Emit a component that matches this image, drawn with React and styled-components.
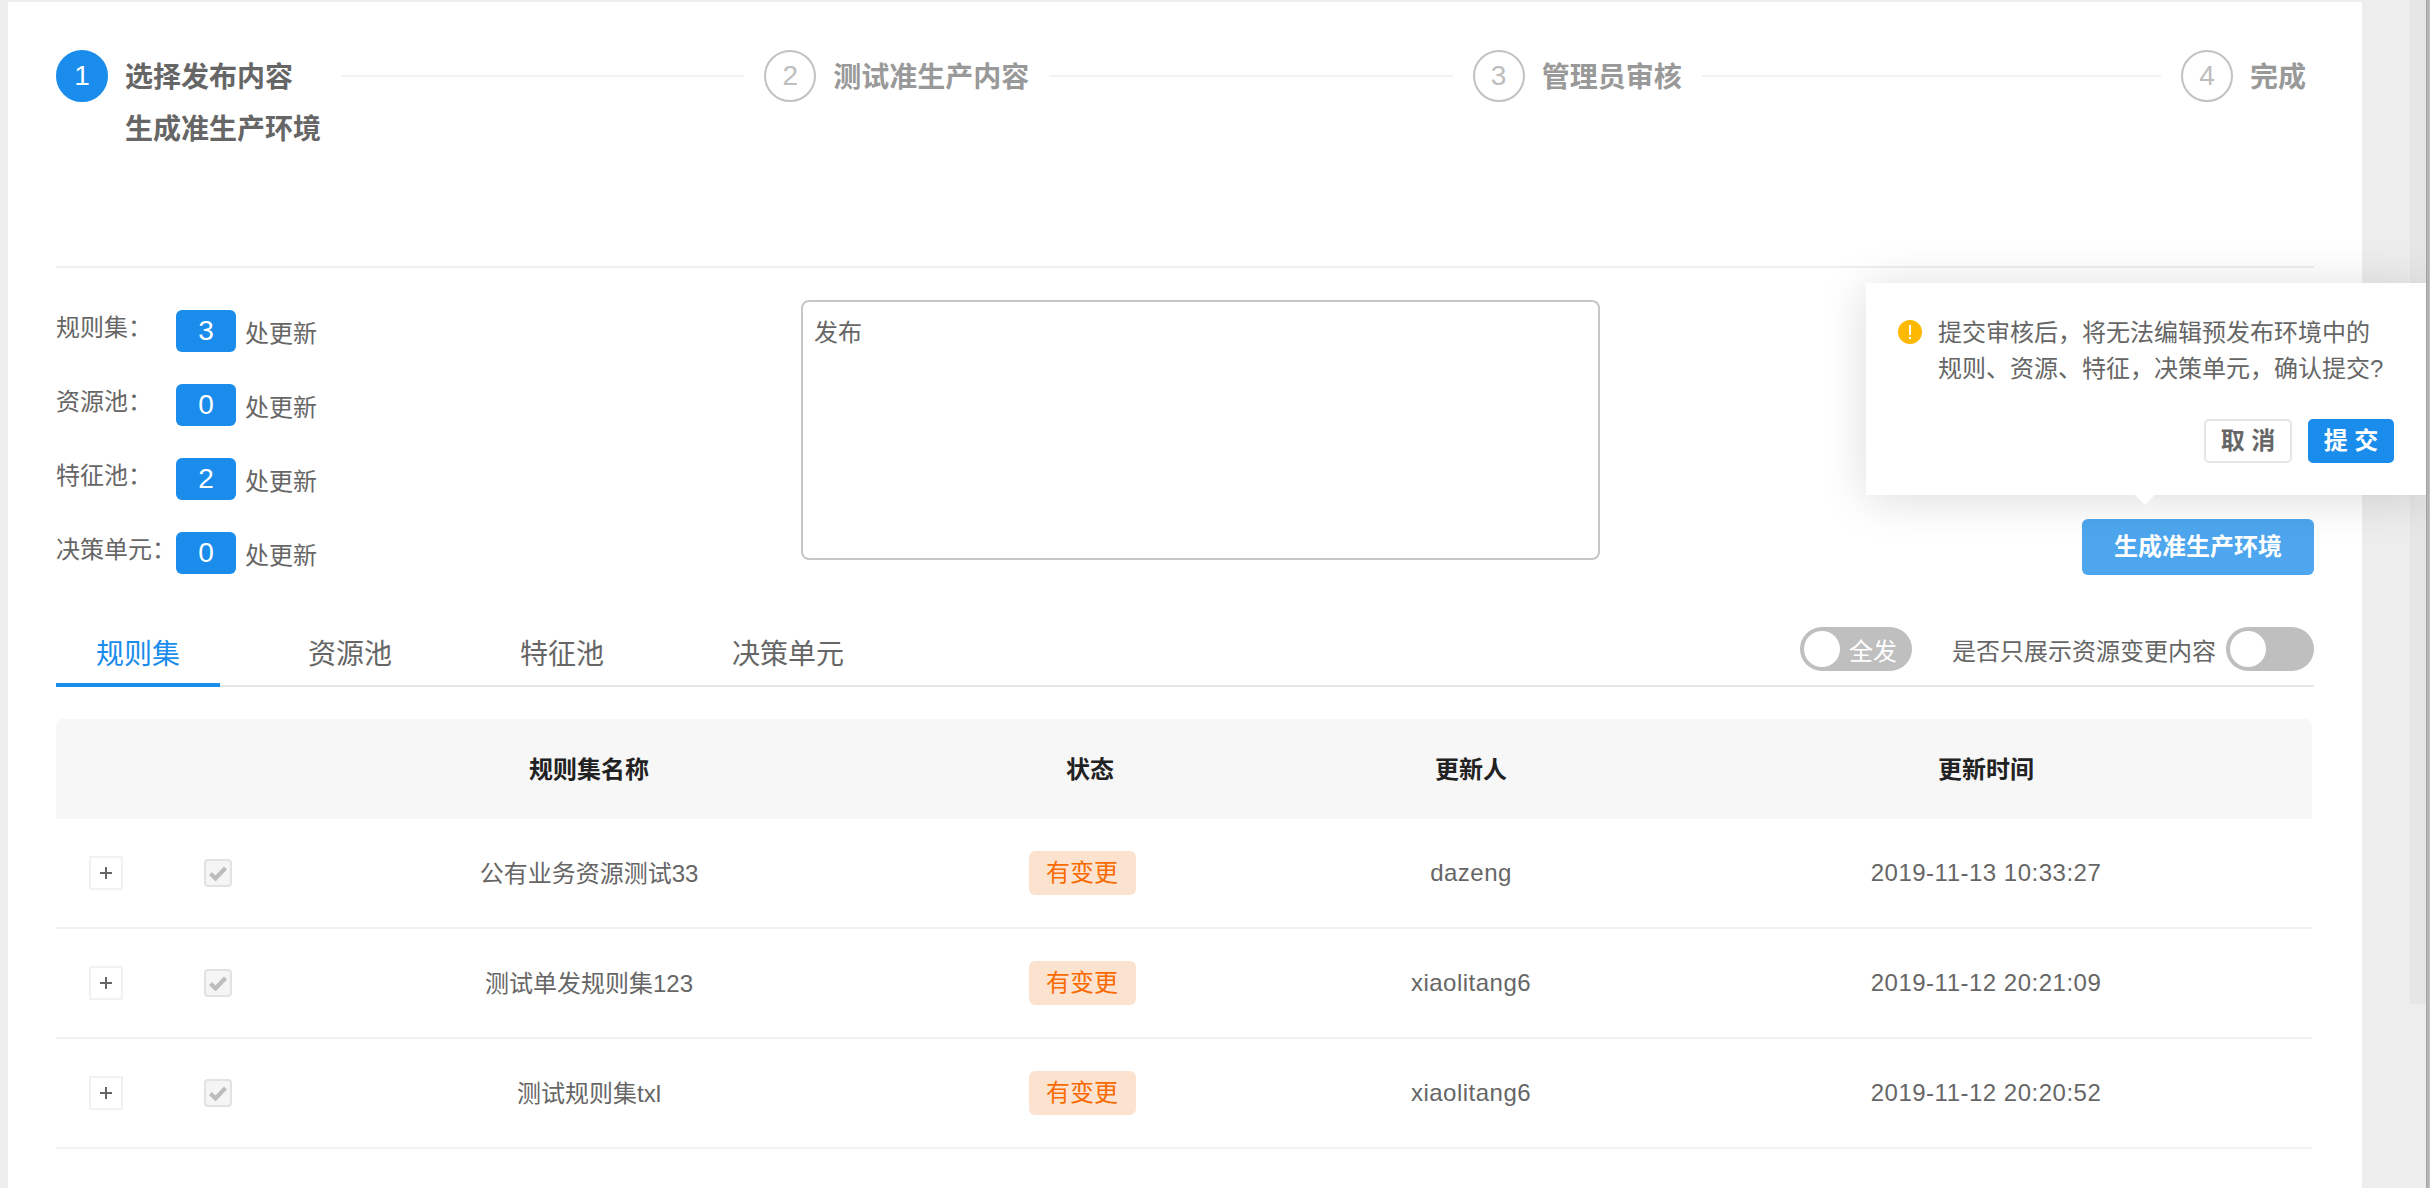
import React from "react";
import styled, { createGlobalStyle } from "styled-components";

const GlobalStyle = createGlobalStyle`
  html, body {
    margin: 0;
    padding: 0;
    background: #ededed;
  }
  body {
    font-family: "Liberation Sans", "Noto Sans CJK SC", sans-serif;
    color: #666;
  }
  * {
    box-sizing: border-box;
  }
`;

const Page = styled.div`
  display: flex;
  height: 1188px;
  overflow: hidden;
  padding-top: 2px;
  padding-left: 8px;
`;

const Panel = styled.main`
  width: 2354px;
  flex: none;
  background: #fff;
  padding: 48px 48px 0;
`;

const Gutter = styled.div`
  flex: 1;
  display: flex;
  justify-content: flex-end;
  margin-top: -2px;
`;

const ScrollThumb = styled.div`
  width: 16px;
  height: 1004px;
  background: #e6e6e6;
`;

const WindowEdge = styled.div`
  width: 4px;
  flex: none;
  margin-top: -2px;
  position: relative;
  z-index: 1;
  background: linear-gradient(90deg, #8e8e8e 0, #b8b8b8 25%, #b0b0b0 75%, #d0d0d0 100%);
`;

// steps
const Steps = styled.div`
  display: flex;
  height: 216px;
`;

const Step = styled.div`
  display: flex;
  flex: ${(p) => (p.$last ? "none" : "1")};
  padding-right: ${(p) => (p.$last ? "8px" : "20px")};
`;

const StepCircle = styled.div`
  width: 52px;
  height: 52px;
  flex: none;
  display: flex;
  align-items: center;
  justify-content: center;
  border-radius: 50%;
  font-size: 28px;
  border: 2px solid ${(p) => (p.$active ? "#1a8cec" : "#c2c2c2")};
  background: ${(p) => (p.$active ? "#1a8cec" : "#fff")};
  color: ${(p) => (p.$active ? "#fff" : "#bdbdbd")};
`;

const StepBody = styled.div`
  margin-left: 17px;
  margin-top: 2px;
  flex: none;
`;

const StepTitle = styled.div`
  font-size: 28px;
  line-height: 52px;
  font-weight: 700;
  color: ${(p) => (p.$active ? "#666" : "#999")};
`;

const StepLine = styled.div`
  flex: 1;
  height: 2px;
  margin: 25px 0 0 20px;
  background: #f2f2f2;
`;

const Divider = styled.div`
  height: 2px;
  background: #efefef;
`;

// summary block
const Summary = styled.section`
  display: flex;
  height: 307px;
  padding-top: 32px;
`;

const Stats = styled.div`
  width: 745px;
  flex: none;
  padding-top: 10px;
  display: flex;
  flex-direction: column;
  gap: 32px;
`;

const StatRow = styled.div`
  display: flex;
  height: 42px;
`;

const StatLabel = styled.div`
  width: 120px;
  font-size: 24px;
  line-height: 36px;
`;

const StatBadge = styled.div`
  width: 60px;
  height: 42px;
  border-radius: 6px;
  background: #1a8cec;
  color: #fff;
  font-size: 28px;
  line-height: 42px;
  text-align: center;
`;

const StatTail = styled.div`
  margin-left: 9px;
  font-size: 24px;
  line-height: 48px;
`;

const Remark = styled.div`
  width: 799px;
  height: 260px;
  flex: none;
  border: 2px solid #c6c6c6;
  border-radius: 8px;
  padding: 13px 11px;
  font-size: 24px;
  line-height: 36px;
`;

const Actions = styled.div`
  flex: 1;
  display: flex;
  justify-content: flex-end;
  align-items: flex-end;
`;

const GenerateWrap = styled.div`
  position: relative;
`;

const GenerateButton = styled.div`
  width: 232px;
  height: 56px;
  border-radius: 6px;
  background: #4da6ee;
  color: #fff;
  font-size: 24px;
  font-weight: 700;
  line-height: 56px;
  text-align: center;
`;

const Popover = styled.div`
  position: absolute;
  right: -112px;
  bottom: calc(100% + 24px);
  width: 560px;
  height: 212px;
  padding: 32px 20px 0 32px;
  background: #fff;
  box-shadow: 0 4px 44px rgba(0, 0, 0, 0.14);

  &::after {
    content: "";
    position: absolute;
    left: 50%;
    bottom: -7px;
    width: 14px;
    height: 14px;
    margin-left: -8px;
    background: #fff;
    transform: rotate(45deg);
  }
`;

const PopMessage = styled.div`
  display: flex;
  gap: 16px;
  font-size: 24px;
  line-height: 36px;
  white-space: nowrap;
`;

const WarnIcon = styled.svg`
  width: 24px;
  height: 24px;
  flex: none;
  margin-top: 5px;
`;

const PopButtons = styled.div`
  display: flex;
  justify-content: flex-end;
  gap: 16px;
  margin-top: 32px;
  margin-right: 12px;
`;

const PopButton = styled.div`
  width: ${(p) => (p.$primary ? "86px" : "88px")};
  height: 44px;
  border-radius: 5px;
  border: 2px solid ${(p) => (p.$primary ? "#1a8cec" : "#e6e6e6")};
  background: ${(p) => (p.$primary ? "#1a8cec" : "#fff")};
  color: ${(p) => (p.$primary ? "#fff" : "#666")};
  font-size: 24px;
  font-weight: 700;
  line-height: 40px;
  text-align: center;
`;

// tabs
const TabBar = styled.div`
  display: flex;
  align-items: flex-start;
  margin-top: 52px;
  height: 60px;
  border-bottom: 2px solid #e6e6e6;
`;

const Tab = styled.div`
  padding: 8px 40px 0;
  margin-right: 48px;
  height: 60px;
  font-size: 28px;
  line-height: 40px;
  white-space: nowrap;
  color: ${(p) => (p.$active ? "#1a8cec" : "#666")};
  border-bottom: 4px solid ${(p) => (p.$active ? "#1a8cec" : "transparent")};
`;

const TabTools = styled.div`
  margin-left: auto;
  display: flex;
  align-items: center;
  height: 44px;
`;

const Switch = styled.div`
  width: ${(p) => p.$width}px;
  height: 44px;
  flex: none;
  padding: 0 4px;
  display: flex;
  align-items: center;
  gap: 9px;
  border-radius: 22px;
  background: #bfbfbf;
  color: #fff;
  font-size: 24px;
  white-space: nowrap;
`;

const Knob = styled.div`
  width: 36px;
  height: 36px;
  flex: none;
  border-radius: 50%;
  background: #fff;
`;

const ToolLabel = styled.div`
  margin: 0 10px 0 40px;
  font-size: 24px;
  white-space: nowrap;
`;

// table
const columns = "100px 124px 618px 384px 378px 652px";

const Table = styled.div`
  width: 2256px;
  margin-top: 32px;
`;

const HeadRow = styled.div`
  display: grid;
  grid-template-columns: ${columns};
  height: 100px;
  padding-bottom: 3px;
  align-items: center;
  background: #f7f7f7;
  border-radius: 6px 6px 0 0;
  color: #222;
  font-size: 24px;
  font-weight: 700;
  text-align: center;
`;

const BodyRow = styled.div`
  display: grid;
  grid-template-columns: ${columns};
  height: 110px;
  align-items: center;
  border-bottom: 2px solid #f2f2f2;
  font-size: 24px;
  text-align: center;
`;

const Cell = styled.div`
  display: flex;
  justify-content: center;
  align-items: center;
`;

const NameText = styled.div`
  margin-top: -3px;
`;

const MetaText = styled.div`
  letter-spacing: 0.5px;
`;

const Expand = styled.div`
  width: 34px;
  height: 34px;
  border: 2px solid #f2f2f2;
  display: flex;
  align-items: center;
  justify-content: center;
`;

const CheckBox = styled.div`
  width: 28px;
  height: 28px;
  border: 2px solid #e2e2e2;
  border-radius: 4px;
  background: #f5f5f5;
  display: flex;
  align-items: center;
  justify-content: center;
`;

const StatusTag = styled.div`
  width: 107px;
  height: 44px;
  margin-right: 16px;
  border-radius: 6px;
  background: #fce3d0;
  color: #f96a00;
  font-size: 24px;
  line-height: 44px;
`;

const steps = [
  { no: 1, title: "选择发布内容", desc: "生成准生产环境", active: true },
  { no: 2, title: "测试准生产内容" },
  { no: 3, title: "管理员审核" },
  { no: 4, title: "完成", last: true },
];

const stats = [
  { label: "规则集：", count: 3 },
  { label: "资源池：", count: 0 },
  { label: "特征池：", count: 2 },
  { label: "决策单元：", count: 0 },
];

const tabs = ["规则集", "资源池", "特征池", "决策单元"];

const rows = [
  { name: "公有业务资源测试33", user: "dazeng", time: "2019-11-13 10:33:27" },
  { name: "测试单发规则集123", user: "xiaolitang6", time: "2019-11-12 20:21:09" },
  { name: "测试规则集txl", user: "xiaolitang6", time: "2019-11-12 20:20:52" },
];

const PlusIcon = () => (
  <svg width="14" height="14" viewBox="0 0 14 14">
    <path d="M7 1v12M1 7h12" stroke="#666" strokeWidth="2" fill="none" />
  </svg>
);

const CheckIcon = () => (
  <svg width="18" height="15" viewBox="0 0 18 15">
    <path d="M1.5 7.5l5 5L16.5 2" stroke="#bdbdbd" strokeWidth="4.2" fill="none" />
  </svg>
);

const App = () => (
  <>
    <GlobalStyle />
    <Page>
      <Panel>
        <Steps>
          {steps.map((s) => (
            <Step key={s.no} $last={s.last}>
              <StepCircle $active={s.active}>{s.no}</StepCircle>
              <StepBody>
                <StepTitle $active={s.active}>{s.title}</StepTitle>
                {s.desc && <StepTitle $active={s.active}>{s.desc}</StepTitle>}
              </StepBody>
              {!s.last && <StepLine />}
            </Step>
          ))}
        </Steps>
        <Divider />

        <Summary>
          <Stats>
            {stats.map((s) => (
              <StatRow key={s.label}>
                <StatLabel>{s.label}</StatLabel>
                <StatBadge>{s.count}</StatBadge>
                <StatTail>处更新</StatTail>
              </StatRow>
            ))}
          </Stats>
          <Remark>发布</Remark>
          <Actions>
            <GenerateWrap>
              <Popover>
                <PopMessage>
                  <WarnIcon viewBox="0 0 24 24">
                    <circle cx="12" cy="12" r="12" fill="#fdb900" />
                    <rect x="11" y="5" width="2" height="10" fill="#fff" />
                    <rect x="11" y="17" width="2" height="2" fill="#fff" />
                  </WarnIcon>
                  <div>
                    提交审核后，将无法编辑预发布环境中的
                    <br />
                    规则、资源、特征，决策单元，确认提交?
                  </div>
                </PopMessage>
                <PopButtons>
                  <PopButton>取 消</PopButton>
                  <PopButton $primary>提 交</PopButton>
                </PopButtons>
              </Popover>
              <GenerateButton>生成准生产环境</GenerateButton>
            </GenerateWrap>
          </Actions>
        </Summary>

        <TabBar>
          {tabs.map((t, i) => (
            <Tab key={t} $active={i === 0}>
              {t}
            </Tab>
          ))}
          <TabTools>
            <Switch $width={112}>
              <Knob />
              全发
            </Switch>
            <ToolLabel>是否只展示资源变更内容</ToolLabel>
            <Switch $width={88}>
              <Knob />
            </Switch>
          </TabTools>
        </TabBar>

        <Table>
          <HeadRow>
            <div />
            <div />
            <div>规则集名称</div>
            <div>状态</div>
            <div>更新人</div>
            <div>更新时间</div>
          </HeadRow>
          {rows.map((r) => (
            <BodyRow key={r.name}>
              <Cell>
                <Expand>
                  <PlusIcon />
                </Expand>
              </Cell>
              <Cell>
                <CheckBox>
                  <CheckIcon />
                </CheckBox>
              </Cell>
              <NameText>{r.name}</NameText>
              <Cell>
                <StatusTag>有变更</StatusTag>
              </Cell>
              <MetaText>{r.user}</MetaText>
              <MetaText>{r.time}</MetaText>
            </BodyRow>
          ))}
        </Table>
      </Panel>
      <Gutter>
        <ScrollThumb />
      </Gutter>
      <WindowEdge />
    </Page>
  </>
);

export default App;
